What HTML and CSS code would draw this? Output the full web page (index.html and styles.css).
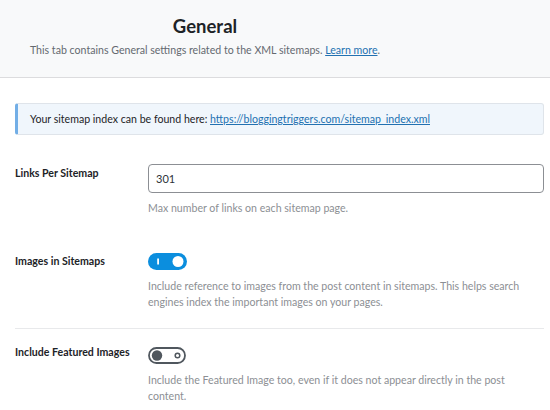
FILE: index.html
```html
<!DOCTYPE html>
<html>
<head>
<meta charset="utf-8">
<link rel="stylesheet" href="styles.css">
</head>
<body>
<header class="head">
  <div class="head-inner">
    <h1 class="title">General</h1>
    <p class="subtitle">This tab contains General settings related to the XML sitemaps. <a href="#" class="link">Learn more</a>.</p>
  </div>
</header>
<main class="content">
  <div class="notice"><p class="notice-text">Your sitemap index can be found here: <a href="#" class="link">https://bloggingtriggers.com/sitemap_index.xml</a></p></div>

  <div class="row row-first">
    <div class="label">Links Per Sitemap</div>
    <div class="field">
      <input class="text-input" type="text" value="301">
      <p class="desc desc-input">Max number of links on each sitemap page.</p>
    </div>
  </div>

  <div class="row row-second">
    <div class="label">Images in Sitemaps</div>
    <div class="field">
      <svg class="toggle" width="39" height="17" viewBox="0 0 39 17">
        <rect x="0" y="0" width="39" height="17" rx="8.5" fill="#0b8ede"/>
        <rect x="9.2" y="5.5" width="1.8" height="6" fill="#fff"/>
        <circle cx="30" cy="8.5" r="5.5" fill="#fff"/>
      </svg>
      <p class="desc">Include reference to images from the post content in sitemaps. This helps search engines index the important images on your pages.</p>
    </div>
  </div>

  <div class="divider"></div>

  <div class="row row-third">
    <div class="label">Include Featured Images</div>
    <div class="field">
      <svg class="toggle" width="38" height="17" viewBox="0 0 38 17">
        <rect x="1" y="1" width="36" height="15" rx="7.5" fill="#fff" stroke="#50575e" stroke-width="1.8"/>
        <circle cx="9" cy="8.5" r="5.2" fill="#50575e"/>
        <circle cx="29.5" cy="8.5" r="2.3" fill="none" stroke="#50575e" stroke-width="1.5"/>
      </svg>
      <p class="desc">Include the Featured Image too, even if it does not appear directly in the post content.</p>
    </div>
  </div>
</main>
</body>
</html>
```
FILE: styles.css
```css
* { box-sizing: border-box; }
body {
  margin: 0;
  font-family: Lato, "Liberation Sans", sans-serif;
  font-size: 10.6px;
  color: #1d2327;
  background: #fff;
}
.head {
  height: 78px;
  background: #f8f9fa;
  border-bottom: 1px solid #dcdcde;
}
.head-inner {
  width: 410px;
  text-align: center;
  padding-top: 13px;
}
.title {
  margin: 0;
  font-size: 18.5px;
  font-weight: 700;
  line-height: 26px;
  color: #1d2327;
}
.subtitle {
  margin: 3px 0 0;
  line-height: 17px;
  color: #646970;
}
.link {
  color: #2271b1;
  text-decoration: underline;
}
.content {
  padding: 25px 6px 0 15px;
}
.notice {
  height: 32px;
  display: flex;
  align-items: center;
  padding-left: 12px;
  background: #f0f6fc;
  border: 1px solid #dfe4ea;
  border-left: 3px solid #72aee6;
  border-radius: 3px;
  color: #1d2327;
}
.notice-text { margin: 0; }
.row {
  display: grid;
  grid-template-columns: 133px 1fr;
}
.row-first { margin-top: 29px; }
.row-second { margin-top: 36px; }
.row-third { margin-top: 18px; }
.label {
  font-weight: 700;
  line-height: 17px;
  color: #1d2327;
}
.row-first .label { padding-top: 1px; }
.row-third .label { margin-top: -3px; }
.field { display: flex; flex-direction: column; align-items: flex-start; }
.text-input {
  width: 100%;
  height: 29px;
  margin: 0;
  padding: 0 7px;
  border: 1px solid #8c8f94;
  border-radius: 4px;
  font-family: inherit;
  font-size: 11px;
  color: #2c3338;
  background: #fff;
}
.toggle { display: block; }
.desc {
  margin: 8px 0 0;
  line-height: 16.5px;
  color: #8c8f94;
}
.desc-input { margin-top: 7px; }
.divider {
  margin-top: 17px;
  height: 1px;
  background: #e8e9eb;
}
```
